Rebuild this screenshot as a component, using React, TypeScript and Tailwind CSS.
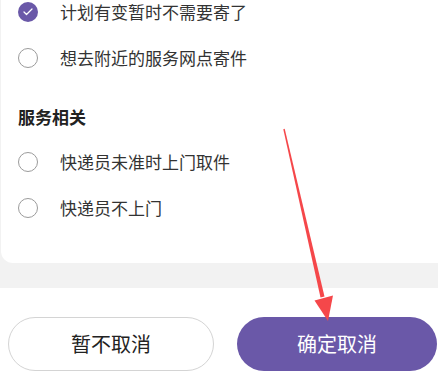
import { Check } from 'lucide-react'

const font = { fontFamily: '"Noto Sans CJK SC", "Noto Sans", sans-serif' }

function Radio({ checked }: { checked?: boolean }) {
  return checked ? (
    <span className="flex h-5 w-5 shrink-0 items-center justify-center rounded-full bg-[#6a58a8]">
      <Check className="h-3 w-3 text-white" strokeWidth={2.5} />
    </span>
  ) : (
    <span className="h-5 w-5 shrink-0 rounded-full border-[1.5px] border-[#9b9b9b]" />
  )
}

function Option({ label, checked }: { label: string; checked?: boolean }) {
  return (
    <div className="flex h-[46px] items-center gap-[22px] pl-[17px]">
      <Radio checked={checked} />
      <span className="text-[17px] text-[#333]">{label}</span>
    </div>
  )
}

export default function App() {
  return (
    <div className="relative h-[390px] w-[438px] overflow-hidden bg-white" style={font}>
      <div className="bg-[#f2f2f2] pb-[25px] pl-px">
        <div className="-mr-4 -mt-[11px] rounded-b-[12px] bg-white pb-[32px]">
          <Option label="计划有变暂时不需要寄了" checked />
          <Option label="想去附近的服务网点寄件" />
          <h3 className="pl-[17px] pt-[24px] pb-[10px] text-[17px] leading-6 font-bold text-[#222]">服务相关</h3>
          <Option label="快递员未准时上门取件" />
          <Option label="快递员不上门" />
        </div>
      </div>

      <div className="flex gap-[23px] pl-2 pt-[29px]">
        <button className="h-[54px] w-[206px] rounded-full border border-[#d4d4d4] text-[20px] text-[#222]">
          暂不取消
        </button>
        <button className="h-[54px] w-[200px] rounded-full bg-[#6a58a8] text-[20px] text-white">
          确定取消
        </button>
      </div>

      <svg className="pointer-events-none absolute inset-0" width="438" height="390">
        <polygon
          points="284.7,128.8 283.3,129.2 320.5,297.5 324.5,296.5"
          fill="#f5474a"
        />
        <polygon points="328,321 314.5,300.5 333,295.5" fill="#f5474a" />
      </svg>
    </div>
  )
}
